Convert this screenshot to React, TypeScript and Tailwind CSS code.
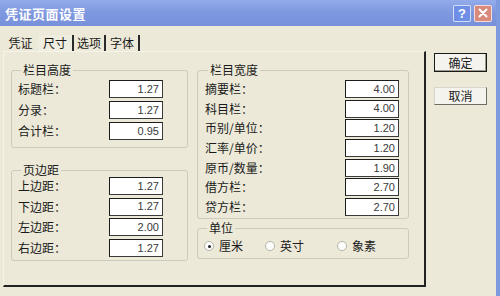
const cjk = { fontFamily: '"Noto Sans CJK SC", "Noto Sans", sans-serif' };
const num = { fontFamily: '"Liberation Sans", Arial, sans-serif' };

type Row = { label: string; value: string };

const heightRows: Row[] = [
  { label: "标题栏：", value: "1.27" },
  { label: "分录：", value: "1.27" },
  { label: "合计栏：", value: "0.95" },
];

const marginRows: Row[] = [
  { label: "上边距：", value: "1.27" },
  { label: "下边距：", value: "1.27" },
  { label: "左边距：", value: "2.00" },
  { label: "右边距：", value: "1.27" },
];

const widthRows: Row[] = [
  { label: "摘要栏：", value: "4.00" },
  { label: "科目栏：", value: "4.00" },
  { label: "币别/单位：", value: "1.20" },
  { label: "汇率/单价：", value: "1.20" },
  { label: "原币/数量：", value: "1.90" },
  { label: "借方栏：", value: "2.70" },
  { label: "贷方栏：", value: "2.70" },
];

const Field = ({ label, value }: Row) => (
  <div className="flex items-center justify-between h-[18px]">
    <span className="text-[12px] leading-[14px] text-[#1a1a1a]">{label}</span>
    <div
      className="w-[54px] h-[18px] bg-white border border-t-[#1c1c1c] border-l-[#1c1c1c] border-b-[#3a3a3a] border-r-[#3a3a3a] flex items-center justify-end pr-[3px] text-[11px] text-[#3a3a3a]"
      style={num}
    >
      {value}
    </div>
  </div>
);

const Group = ({ title, className, children }: { title: string; className: string; children: React.ReactNode }) => (
  <fieldset className={"border border-[#cdcbbd] rounded-[3px] " + className}>
    <legend className="ml-[3px] px-[2px] text-[12px] leading-[14px] text-[#1a1a1a]">{title}</legend>
    {children}
  </fieldset>
);

const Radio = ({ label, checked, w }: { label: string; checked?: boolean; w: string }) => (
  <div className={"flex items-center gap-[5px] " + w}>
    <span className="w-[10px] h-[10px] rounded-full border border-[#b5b3a8] bg-white flex items-center justify-center">
      {checked && <span className="w-[3px] h-[3px] rounded-full bg-[#222]" />}
    </span>
    <span className="text-[12px] leading-[14px] text-[#1a1a1a]">{label}</span>
  </div>
);

export default function App() {
  return (
    <div className="w-[500px] h-[296px] bg-[#ece9d8] overflow-hidden flex flex-col border-r-4 border-[#7f99df]" style={cjk}>
      {/* title bar */}
      <div className="h-[26px] shrink-0 bg-gradient-to-b from-[#93abea] via-[#7e98df] to-[#7891dc] flex items-center justify-between pl-[5px] pr-[4px]">
        <span className="text-white font-bold text-[13px] leading-none tracking-[0.5px]">凭证页面设置</span>
        <div className="flex gap-[3px]">
          <div className="w-[18px] h-[17px] rounded-[2px] bg-[#6f8fe6] border border-white/70 flex items-center justify-center text-white font-bold text-[13px] leading-none" style={num}>
            ?
          </div>
          <div className="w-[18px] h-[17px] rounded-[2px] bg-[#d98a7c] border border-white/70 flex items-center justify-center">
            <svg width="10" height="10" viewBox="0 0 10 10">
              <path d="M1.5 1.5 L8.5 8.5 M8.5 1.5 L1.5 8.5" stroke="white" strokeWidth="2" strokeLinecap="round" />
            </svg>
          </div>
        </div>
      </div>

      <div className="flex flex-1">
        {/* tabs + panel */}
        <div className="flex flex-col pl-[3px] pt-[9px]">
          <div className="flex h-[16px] text-[12px] leading-[14px] text-[#1a1a1a]">
            <div className="w-[35px] flex items-center justify-center">凭证</div>
            <div className="w-[36px] flex items-center justify-center border-r-2 border-[#2a2a2a] bg-[#efece0]">尺寸</div>
            <div className="w-[32px] flex items-center justify-center border-r-2 border-[#2a2a2a]">选项</div>
            <div className="w-[34px] flex items-center justify-center border-r-2 border-[#2a2a2a]">字体</div>
          </div>
          <div className="w-[423px] h-[236px] border-t border-l border-t-[#f5f3ea] border-l-[#f5f3ea] border-r-2 border-b-2 border-r-[#222] border-b-[#222] flex gap-[9px] pl-[7px] pt-[11px]">
            <div className="flex flex-col w-[177px] gap-[15px]">
              <Group title="栏目高度" className="pl-[6px] pr-[24px] pt-[3px] pb-[7px]">
                <div className="flex flex-col gap-[3px]">
                  {heightRows.map((r) => (
                    <Field key={r.label} {...r} />
                  ))}
                </div>
              </Group>
              <Group title="页边距" className="pl-[6px] pr-[24px] pt-0 pb-[3px]">
                <div className="flex flex-col gap-[2.6px]">
                  {marginRows.map((r) => (
                    <Field key={r.label} {...r} />
                  ))}
                </div>
              </Group>
            </div>
            <div className="flex flex-col w-[212px] gap-[2px]">
              <Group title="栏目宽度" className="pl-[7px] pr-[9px] pt-[3px] pb-[2px]">
                <div className="flex flex-col gap-[1.7px]">
                  {widthRows.map((r) => (
                    <Field key={r.label} {...r} />
                  ))}
                </div>
              </Group>
              <Group title="单位" className="pl-[6px] pt-[3px] pb-[4px]">
                <div className="flex h-[16px] items-center">
                  <Radio label="厘米" checked w="w-[61px]" />
                  <Radio label="英寸" w="w-[72px]" />
                  <Radio label="象素" w="w-[60px]" />
                </div>
              </Group>
            </div>
          </div>
        </div>

        {/* buttons */}
        <div className="flex flex-col pl-[8px] pt-[27px] gap-[15px]">
          <button className="w-[53px] h-[19px] bg-[#f4f3ee] border border-[#1a1a1a] shadow-[inset_-1px_-1px_0_#9d9a8c] text-[12px] leading-none text-[#1a1a1a]">
            确定
          </button>
          <button className="w-[53px] h-[18px] bg-[#f4f3ee] border border-[#d8d6cc] border-b-[#6e6c62] border-r-[#6e6c62] text-[12px] leading-none text-[#1a1a1a]">
            取消
          </button>
        </div>
      </div>
    </div>
  );
}
